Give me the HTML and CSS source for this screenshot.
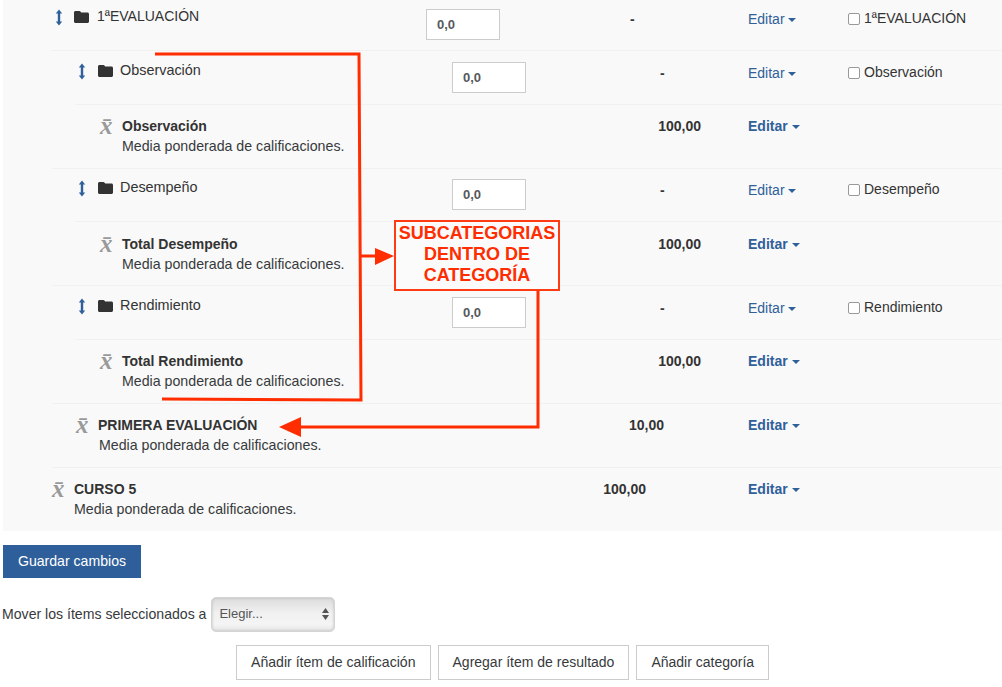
FILE: index.html
```html
<!DOCTYPE html>
<html lang="es">
<head>
<meta charset="utf-8">
<title>Categorías y elementos</title>
<link rel="stylesheet" href="styles.css">
</head>
<body>
<svg width="0" height="0" class="defs">
  <symbol id="move" viewBox="0 0 10 17"><path d="M5 0.5 8.2 4.5H6.2V12.5H8.2L5 16.5 1.8 12.5H3.8V4.5H1.8Z"/></symbol>
  <symbol id="folder" viewBox="0 0 15 12"><path d="M1.5 0H5.2C6 0 6.4.4 6.8 1L7.2 1.6H13.5C14.3 1.6 15 2.3 15 3.1V10.5C15 11.3 14.3 12 13.5 12H1.5C.7 12 0 11.3 0 10.5V1.5C0 .7.7 0 1.5 0Z"/></symbol>
</svg>
<main class="page">
  <section class="panel">
    <div class="row cat l1 first">
      <div class="name"><svg class="move"><use href="#move"/></svg><svg class="folder"><use href="#folder"/></svg><span>1ªEVALUACIÓN</span></div>
      <div class="val"><input class="weight" value="0,0"><span class="dash">-</span></div>
      <a class="edit">Editar <i class="caret"></i></a>
      <label class="pick"><input type="checkbox">1ªEVALUACIÓN</label>
    </div>
    <div class="row cat l2">
      <div class="name"><svg class="move"><use href="#move"/></svg><svg class="folder"><use href="#folder"/></svg><span>Observación</span></div>
      <div class="val"><input class="weight" value="0,0"><span class="dash">-</span></div>
      <a class="edit">Editar <i class="caret"></i></a>
      <label class="pick"><input type="checkbox">Observación</label>
    </div>
    <div class="row total t3">
      <div class="name"><i class="xbar">x̄</i><div class="info"><b>Observación</b><span>Media ponderada de calificaciones.</span></div></div>
      <div class="val num">100,00</div>
      <a class="edit strong">Editar <i class="caret"></i></a>
    </div>
    <div class="row cat l2 tight">
      <div class="name"><svg class="move"><use href="#move"/></svg><svg class="folder"><use href="#folder"/></svg><span>Desempeño</span></div>
      <div class="val"><input class="weight" value="0,0"><span class="dash">-</span></div>
      <a class="edit">Editar <i class="caret"></i></a>
      <label class="pick"><input type="checkbox">Desempeño</label>
    </div>
    <div class="row total t3 low">
      <div class="name"><i class="xbar">x̄</i><div class="info"><b>Total Desempeño</b><span>Media ponderada de calificaciones.</span></div></div>
      <div class="val num">100,00</div>
      <a class="edit strong">Editar <i class="caret"></i></a>
    </div>
    <div class="row cat l2">
      <div class="name"><svg class="move"><use href="#move"/></svg><svg class="folder"><use href="#folder"/></svg><span>Rendimiento</span></div>
      <div class="val"><input class="weight" value="0,0"><span class="dash">-</span></div>
      <a class="edit">Editar <i class="caret"></i></a>
      <label class="pick"><input type="checkbox">Rendimiento</label>
    </div>
    <div class="row total t3">
      <div class="name"><i class="xbar">x̄</i><div class="info"><b>Total Rendimiento</b><span>Media ponderada de calificaciones.</span></div></div>
      <div class="val num">100,00</div>
      <a class="edit strong">Editar <i class="caret"></i></a>
    </div>
    <div class="row total t2">
      <div class="name"><i class="xbar">x̄</i><div class="info"><b>PRIMERA EVALUACIÓN</b><span>Media ponderada de calificaciones.</span></div></div>
      <div class="val num">10,00</div>
      <a class="edit strong">Editar <i class="caret"></i></a>
    </div>
    <div class="row total t1 last">
      <div class="name"><i class="xbar">x̄</i><div class="info"><b>CURSO 5</b><span>Media ponderada de calificaciones.</span></div></div>
      <div class="val num">100,00</div>
      <a class="edit strong">Editar <i class="caret"></i></a>
    </div>
  </section>

  <button class="save">Guardar cambios</button>
  <div class="move-to">
    <span>Mover los ítems seleccionados a</span>
    <div class="select">Elegir...<svg class="updown" viewBox="0 0 7 12"><path d="M3.5 0 7 5H0ZM3.5 12 0 7H7Z"/></svg></div>
  </div>
  <div class="actions">
    <button>Añadir ítem de calificación</button>
    <button>Agregar ítem de resultado</button>
    <button>Añadir categoría</button>
  </div>
</main>

<svg class="notes" width="1002" height="687" viewBox="0 0 1002 687">
  <g class="ink">
    <path d="M155 54H359L361 400 162 399"/>
    <path d="M361 256H378"/>
    <path d="M538 290V427H296"/>
  </g>
  <path class="head" d="M375 248 394 256 375 265Z"/>
  <path class="head" d="M279 427 301 417V437Z"/>
</svg>
<div class="callout">SUBCATEGORIAS<br>DENTRO DE<br>CATEGORÍA</div>
</body>
</html>
```
FILE: styles.css
```css
* { box-sizing: border-box; }
html, body { margin: 0; padding: 0; }
body {
  background: #fff;
  color: #373a3c;
  font: 14px/20px "Liberation Sans", Arial, sans-serif;
  width: 1002px;
  height: 687px;
  overflow: hidden;
  position: relative;
}
.defs { position: absolute; }
.panel { margin-left: 3px; background: #f9f9f9; height: 531px; }

.row {
  display: grid;
  border-bottom: 1px solid #f1f1f1;
  height: 54px;
}
.total { height: 64px; }
.first { height: 51px; }
.tight { height: 53px; }
.last { border-bottom: 0; height: 63px; }
.l1 { margin-left: 48px; grid-template-columns: 375px 322px 100px 1fr; }
.l2 { margin-left: 72px; grid-template-columns: 377px 296px 100px 1fr; }
.t3, .t2 { margin-left: 49px; grid-template-columns: 400px 296px 100px 1fr; }
.t1 { margin-left: 24px; grid-template-columns: 425px 296px 100px 1fr; }

.name { display: flex; align-items: flex-start; }
.cat .name { padding-top: 9px; color: #333; font-size: 14.4px; }
.cat.first .name { padding-top: 6px; font-size: 14px; }
.cat.tight .name { padding-top: 8px; }
.move { width: 10px; height: 17px; fill: #2f6099; margin: 3px 0 0 2px; flex: none; }
.folder { width: 15px; height: 12px; fill: #333; margin: 5px 7px 0 11px; flex: none; }
.first .folder { margin-right: 8px; }
.first .move { margin-left: 3px; }
.first .folder { margin-left: 10px; }

.total .name { padding-top: 11px; }
.low .name { padding-top: 12px; }
.t3 .name { padding-left: 48px; }
.t2 .name { padding-left: 24px; }
.t1 .name { padding-left: 25px; }
.xbar {
  width: 22px;
  flex: none;
  font: italic 700 25px/20px "Liberation Serif", serif;
  color: #999;
}
.info { display: flex; flex-direction: column; }
.info b { color: #333; }
.info span { color: #373a3c; font-size: 14.2px; }
.t2 .info span { padding-left: 1px; }

.val { display: flex; align-items: flex-start; padding-top: 11px; }
.first .val { padding-top: 9px; }
.tight .val { padding-top: 10px; }
.num { justify-content: flex-end; padding: 11px 47px 0 0; font-weight: 700; color: #333; }
.low .num { padding-top: 12px; }
.t2 .num { padding-right: 84px; }
.t1 .num { padding-right: 102px; }
.weight {
  width: 74px;
  height: 31px;
  border: 1px solid #ccc;
  background: #fff;
  padding: 0 10px;
  font: 700 13px "Liberation Sans", sans-serif;
  color: #55595c;
  border-radius: 0;
}
.dash { font-weight: 700; margin: 0 0 0 134px; line-height: 20px; }
.l1 .dash { margin-left: 130px; }
.l2 .dash { margin: 1px 0 0 134px; }

.edit { color: #2f6099; padding-top: 12px; display: block; white-space: nowrap; }
.first .edit { padding-top: 9px; }
.tight .edit { padding-top: 11px; }
.strong { font-weight: 700; padding-top: 11px; }
.low .strong { padding-top: 12px; }
.caret {
  display: inline-block;
  border: 4px solid transparent;
  border-top-color: #2f6099;
  border-bottom: 0;
  vertical-align: 2px;
}
.pick { display: flex; align-items: center; height: 20px; margin-top: 11px; white-space: nowrap; color: #333; }
.first .pick { margin-top: 8px; }
.tight .pick { margin-top: 10px; }
.pick input {
  appearance: none;
  width: 12px;
  height: 12px;
  margin: 1px 4px 0 0;
  border: 1px solid #999;
  border-radius: 2px;
  background: #fff;
}

.save {
  display: block;
  margin: 14px 0 0 3px;
  width: 138px;
  height: 33px;
  padding: 0 0 2px;
  border: 0;
  background: #2f5f9a;
  color: #fff;
  font: 14.1px "Liberation Sans", sans-serif;
}
.move-to { display: flex; align-items: center; margin: 19px 0 0 2px; height: 35px; font-size: 14.1px; }
.move-to span { padding-bottom: 2px; }
.select {
  margin-left: 5px;
  width: 124px;
  height: 35px;
  padding: 0 0 2px 7px;
  border: 1px solid #d4d4d4;
  border-radius: 5px;
  background: linear-gradient(#dcdcdc, #f1f1f1 45%, #f4f4f4 80%, #e6e6e6);
  box-shadow: inset 0 0 3px #bbb;
  display: flex;
  align-items: center;
  justify-content: space-between;
  font-size: 13px;
  color: #555;
}
.updown { width: 7px; height: 12px; fill: #555; margin-right: 5px; }
.actions { display: flex; gap: 7px; margin: 13px 0 0 236px; }
.actions button {
  height: 35px;
  padding: 0 14px 2px;
  background: #fff;
  border: 1px solid #ccc;
  color: #373a3c;
  font: 14px "Liberation Sans", sans-serif;
}
.actions button:first-child { font-size: 14.1px; }

.notes { position: absolute; left: 0; top: 0; pointer-events: none; }
.ink { fill: none; stroke: #ff2d00; stroke-width: 3; }
.head { fill: #ff2d00; }
.callout {
  position: absolute;
  left: 394px;
  top: 220px;
  width: 166px;
  height: 71px;
  border: 2px solid #ff3b14;
  background: #fbfbfb;
  color: #ff2d00;
  font: 700 18px/21px "Liberation Sans", sans-serif;
  text-align: center;
  padding-top: 1px;
  white-space: nowrap;
}
```
